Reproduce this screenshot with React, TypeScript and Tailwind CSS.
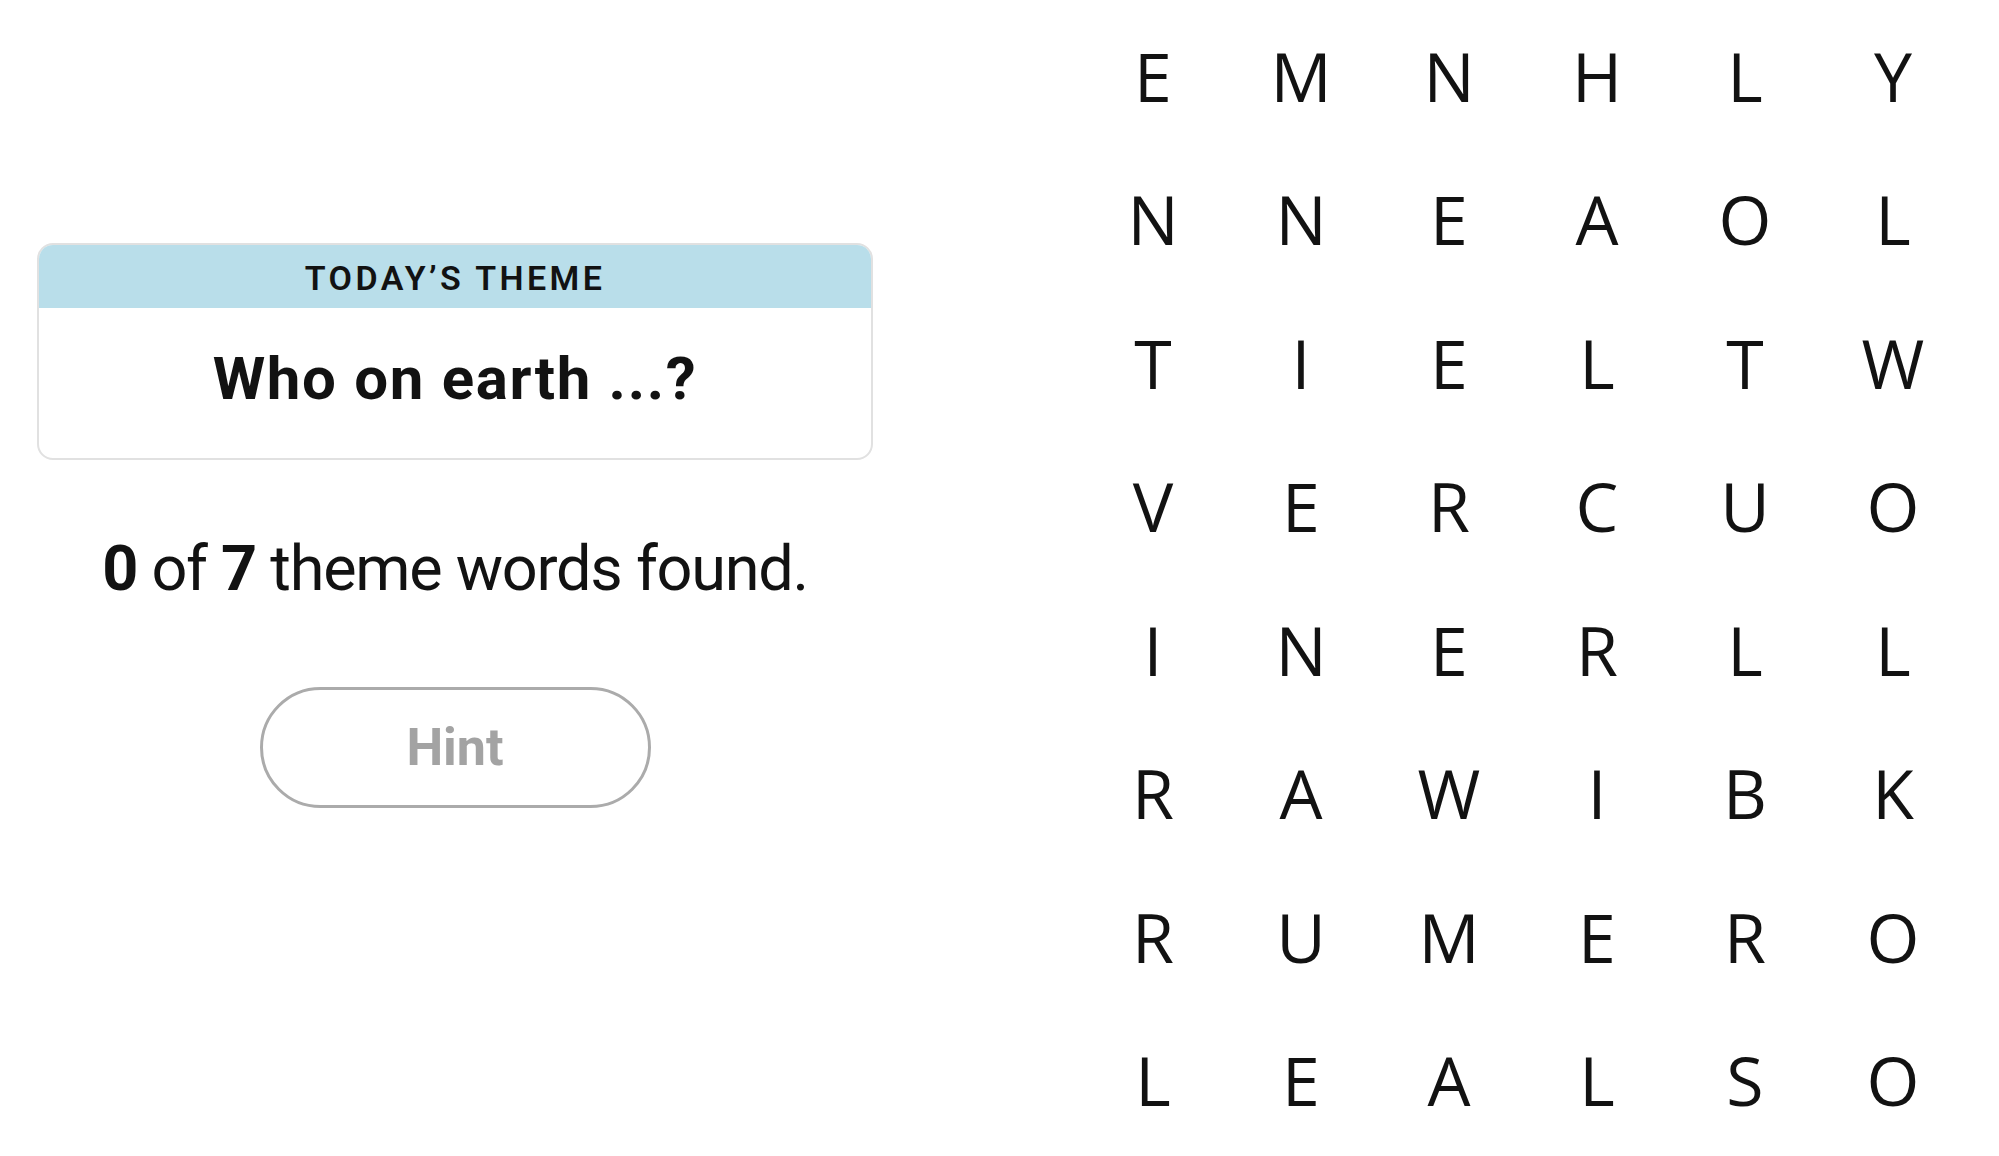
import React from "react";

const rows = [
  "EMNHLY",
  "NNEAOL",
  "TIELTW",
  "VERCUO",
  "INERLL",
  "RAWIBK",
  "RUMERO",
  "LEALSO",
];

export default function App() {
  return (
    <div className="w-[1999px] h-[1156px] bg-white flex overflow-hidden text-[#121212]">
      <div className="ml-[37px] w-[836px] flex flex-col items-center">
        <div className="mt-[243px] w-[836px] rounded-[16px] overflow-hidden border-2 border-[#e1e1e1] flex flex-col">
          <div className="h-[63px] bg-[#b9deea] flex items-center justify-center pt-[3px] font-['Roboto',sans-serif] font-semibold text-[34px] tracking-[0.1em] text-[#121212]">
            TODAY’S THEME
          </div>
          <div className="h-[150px] flex items-center justify-center pb-[8px] font-['Roboto',sans-serif] font-bold text-[60px] leading-none tracking-[0.028em]">
            Who on earth ...?
          </div>
        </div>
        <p className="mt-[77px] font-['Roboto',sans-serif] text-[63px] leading-[63px] tracking-[-0.02em] whitespace-nowrap">
          <span className="font-bold">0</span> of <span className="font-bold">7</span> theme words found.
        </p>
        <button className="mt-[87px] h-[121px] w-[391px] rounded-full border-[3px] border-[#ababab] bg-white flex items-center justify-center font-['Roboto',sans-serif] font-bold text-[52px] text-[#a3a3a3] leading-none">
          Hint
        </button>
      </div>
      <div className="ml-auto mr-[32px] mt-[4px] grid grid-cols-[repeat(6,148px)] auto-rows-[143.5px]">
        {rows.map((r, ri) =>
          r.split("").map((c, ci) => (
            <div
              key={`${ri}-${ci}`}
              className="flex items-center justify-center font-['Open_Sans',sans-serif] text-[68px] leading-none text-[#121212]"
            >
              {c}
            </div>
          ))
        )}
      </div>
    </div>
  );
}
